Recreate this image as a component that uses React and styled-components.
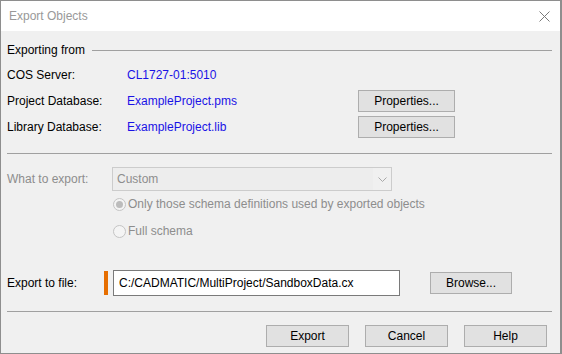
import React from "react";
import styled, { createGlobalStyle } from "styled-components";

const Global = createGlobalStyle`
  html, body { margin: 0; padding: 0; background: #6b6b6b; }
  body { font-family: "Segoe UI", "Liberation Sans", Arial, sans-serif; font-size: 12px; }
  * { box-sizing: border-box; }
`;

const Window = styled.div`
  width: 562px;
  height: 354px;
  display: flex;
  flex-direction: column;
  border: 1px solid #8e8e8e;
  border-right-width: 2px;
  background: #f0f0f0;
  color: #000;
`;

const TitleBar = styled.div`
  height: 30px;
  flex: none;
  background: #fff;
  display: flex;
  align-items: center;
  justify-content: space-between;
  padding: 0 10px 0 8px;
  color: #999;
  font-size: 12px;
`;

const Content = styled.div`
  flex: 1;
  display: flex;
  flex-direction: column;
  padding: 0 8px 0 6px;
`;

const GroupHeader = styled.div`
  display: flex;
  align-items: center;
  gap: 7px;
  height: 18px;
  margin-top: 10px;
  margin-bottom: 3px;
  &::after {
    content: "";
    flex: 1;
    height: 1px;
    background: #a0a0a0;
  }
`;

const InfoRow = styled.div`
  display: flex;
  align-items: center;
  height: 26px;
`;

const Label = styled.div`
  width: ${(p) => p.$w || 120}px;
  flex: none;
  color: ${(p) => (p.$disabled ? "#8d8d8d" : "#000")};
`;

const Value = styled.div`
  width: 231px;
  color: #1a12e6;
`;

const Button = styled.button`
  width: ${(p) => p.$w || 97}px;
  height: ${(p) => p.$h || 22}px;
  background: #e1e1e1;
  border: 1px solid #adadad;
  font: inherit;
  color: #000;
  padding: 0;
  margin: 0;
`;

const Separator = styled.div`
  height: 1px;
  background: #a0a0a0;
  margin-top: ${(p) => p.$mt || 0}px;
`;

const ComboRow = styled.div`
  display: flex;
  align-items: center;
  margin-top: 13px;
  height: 24px;
`;

const Combo = styled.div`
  width: 280px;
  height: 24px;
  border: 1px solid #cccccc;
  background: #f0f0f0;
  display: flex;
  align-items: center;
  color: #8d8d8d;
`;

const ComboText = styled.div`
  flex: 1;
  height: 100%;
  display: flex;
  align-items: center;
  padding-left: 4px;
  background: #ededed;
`;

const ComboArrow = styled.div`
  width: 18px;
  height: 100%;
  display: flex;
  align-items: center;
  justify-content: center;
`;

const RadioList = styled.div`
  display: flex;
  flex-direction: column;
  padding-left: 106px;
  margin-top: 3px;
  gap: 7px;
`;

const RadioRow = styled.div`
  display: flex;
  align-items: center;
  height: 20px;
  gap: 2px;
  color: #8d8d8d;
`;

const RadioCircle = styled.span`
  width: 13px;
  height: 13px;
  border-radius: 50%;
  border: 1px solid #c4c4c4;
  background: #f4f4f4;
  display: inline-flex;
  align-items: center;
  justify-content: center;
  flex: none;
  &::after {
    content: "";
    width: 7px;
    height: 7px;
    border-radius: 50%;
    background: ${(p) => (p.$checked ? "#bcbcbc" : "transparent")};
  }
`;

const FileRow = styled.div`
  display: flex;
  align-items: center;
  margin-top: 29px;
  height: 26px;
`;

const Marker = styled.div`
  width: 4px;
  height: 24px;
  background: #e66e00;
  margin-right: 5px;
  flex: none;
`;

const TextInput = styled.input`
  width: 287px;
  height: 26px;
  border: 1px solid #7a7a7a;
  background: #fff;
  font: inherit;
  color: #000;
  padding: 0 0 0 5px;
  margin: 0 30px 0 0;
  outline: none;
`;

const Footer = styled.div`
  display: flex;
  justify-content: flex-end;
  gap: 16px;
  padding-top: 13px;
  padding-right: 5px;
`;

const CloseIcon = () => (
  <svg width="11" height="11" viewBox="0 0 11 11">
    <path d="M0.5 0.5 L10.5 10.5 M10.5 0.5 L0.5 10.5" stroke="#7a7a7a" strokeWidth="1" fill="none" />
  </svg>
);

const Chevron = () => (
  <svg width="9" height="5" viewBox="0 0 9 5">
    <path d="M0.5 0.5 L4.5 4.5 L8.5 0.5" stroke="#a8a8a8" strokeWidth="1" fill="none" />
  </svg>
);

const rows = [
  { label: "COS Server:", value: "CL1727-01:5010" },
  { label: "Project Database:", value: "ExampleProject.pms", button: true },
  { label: "Library Database:", value: "ExampleProject.lib", button: true },
];

export default function App() {
  return (
    <>
      <Global />
      <Window>
        <TitleBar>
          <span>Export Objects</span>
          <CloseIcon />
        </TitleBar>
        <Content>
          <GroupHeader>Exporting from</GroupHeader>
          {rows.map((r, i) => (
            <InfoRow key={i}>
              <Label>{r.label}</Label>
              <Value>{r.value}</Value>
              {r.button && <Button>Properties...</Button>}
            </InfoRow>
          ))}
          <Separator $mt={13} />
          <ComboRow>
            <Label $w={105} $disabled>What to export:</Label>
            <Combo>
              <ComboText>Custom</ComboText>
              <ComboArrow>
                <Chevron />
              </ComboArrow>
            </Combo>
          </ComboRow>
          <RadioList>
            <RadioRow>
              <RadioCircle $checked />
              Only those schema definitions used by exported objects
            </RadioRow>
            <RadioRow>
              <RadioCircle />
              Full schema
            </RadioRow>
          </RadioList>
          <FileRow>
            <Label $w={97}>Export to file:</Label>
            <Marker />
            <TextInput readOnly value="C:/CADMATIC/MultiProject/SandboxData.cx" />
            <Button $w={82} $h={22}>Browse...</Button>
          </FileRow>
          <Separator $mt={15} />
          <Footer>
            <Button $w={83} $h={22}>Export</Button>
            <Button $w={83} $h={22}>Cancel</Button>
            <Button $w={83} $h={22}>Help</Button>
          </Footer>
        </Content>
      </Window>
    </>
  );
}
